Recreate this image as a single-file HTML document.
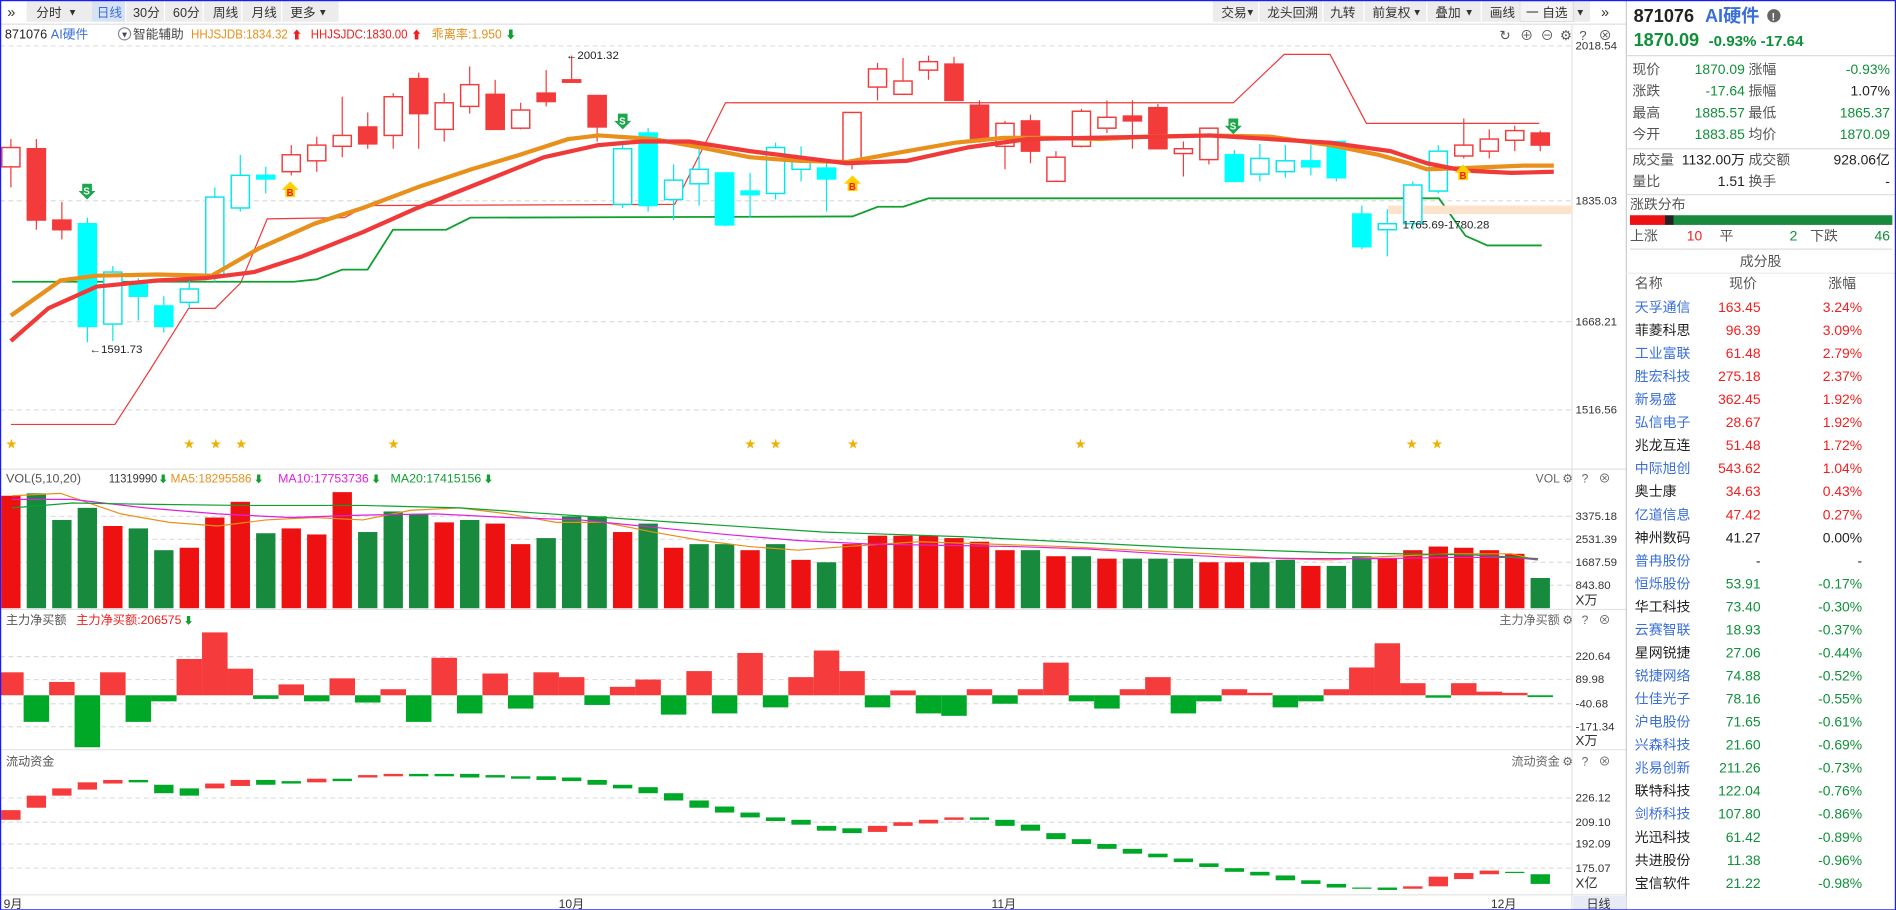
<!DOCTYPE html>
<html><head><meta charset="utf-8">
<style>
html,body{margin:0;padding:0;background:#fff;overflow:hidden}
#wrap{width:1568px;height:753px;transform:scale(1.20918);transform-origin:0 0;position:relative;font-family:"Liberation Sans","Noto Sans CJK SC",sans-serif}
svg text{font-family:"Liberation Sans","Noto Sans CJK SC",sans-serif}
</style></head><body>
<div id="wrap">
<svg id="s" width="1568" height="753" viewBox="0 0 1568 753" xmlns="http://www.w3.org/2000/svg">
<rect x="0" y="0" width="1568" height="753" fill="#fff"/>
<g font-size="10.5" fill="#333">
<rect x="22" y="1" width="54" height="17" fill="#ececec"/>
<rect x="76" y="1" width="28" height="17" fill="#d7e3f5"/>
<rect x="104" y="1" width="176" height="17" fill="#ececec"/>
<line x1="104" y1="1" x2="104" y2="18" stroke="#fff"/><line x1="136" y1="1" x2="136" y2="18" stroke="#fff"/><line x1="168" y1="1" x2="168" y2="18" stroke="#fff"/><line x1="200" y1="1" x2="200" y2="18" stroke="#fff"/><line x1="233" y1="1" x2="233" y2="18" stroke="#fff"/>
<text x="6" y="14" font-size="12">»</text>
<text x="30" y="14">分时</text><text x="56" y="13" font-size="8">▼</text>
<text x="80" y="14" fill="#3a6fd8">日线</text>
<text x="110" y="14">30分</text><text x="143" y="14">60分</text><text x="176" y="14">周线</text><text x="208" y="14">月线</text><text x="240" y="14">更多</text><text x="263" y="13" font-size="8">▼</text>
<rect x="1003" y="1" width="312" height="17" fill="#ececec"/>
<g stroke="#fff"><line x1="1041" y1="1" x2="1041" y2="18"/><line x1="1094" y1="1" x2="1094" y2="18"/><line x1="1128" y1="1" x2="1128" y2="18"/><line x1="1180" y1="1" x2="1180" y2="18"/><line x1="1225" y1="1" x2="1225" y2="18"/><line x1="1257" y1="1" x2="1257" y2="18"/></g>
<rect x="1257" y="1" width="44" height="17" fill="#f4f4f4" stroke="#ccc" stroke-width="0.5"/>
<text x="1010" y="14">交易</text><text x="1030" y="13" font-size="8">▼</text>
<text x="1048" y="14">龙头回溯</text><text x="1100" y="14">九转</text>
<text x="1135" y="14">前复权</text><text x="1168" y="13" font-size="8">▼</text>
<text x="1187" y="14">叠加</text><text x="1211" y="13" font-size="8">▼</text>
<text x="1232" y="14">画线</text><text x="1262" y="14">一 自选</text><text x="1303" y="13" font-size="8">▼</text>
<text x="1324" y="14" font-size="12">»</text>
</g>
<line x1="0" y1="20" x2="1345" y2="20" stroke="#ddd"/>
<g font-size="10.5">
<text x="4" y="32" fill="#222">871076</text><text x="42" y="32" fill="#3a6fd8">AI硬件</text>
<circle cx="103" cy="28" r="5" fill="#fff" stroke="#889"/><text x="99.5" y="31" font-size="7" fill="#445">▼</text>
<text x="110" y="32" fill="#444">智能辅助</text>
<text x="158" y="32" fill="#e8901a" textLength="80" lengthAdjust="spacingAndGlyphs">HHJSJDB:1834.32</text><text x="241" y="32" fill="#f02020" font-size="9">⬆</text>
<text x="257" y="32" fill="#f02020" textLength="80" lengthAdjust="spacingAndGlyphs">HHJSJDC:1830.00</text><text x="340" y="32" fill="#f02020" font-size="9">⬆</text>
<text x="357" y="32" fill="#e0901a" textLength="58" lengthAdjust="spacingAndGlyphs">乖离率:1.950</text><text x="418" y="32" fill="#10a030" font-size="9">⬇</text>
</g>
<g font-size="11" fill="#555"><text x="1240" y="33">↻</text><text x="1257" y="33">⊕</text><text x="1274" y="33">⊖</text><text x="1290" y="33">⚙</text><text x="1306" y="33">?</text><text x="1322" y="33">⊗</text></g>
<g stroke="#ddd" stroke-dasharray="4,3">
<line x1="0" y1="38" x2="1300" y2="38"/><line x1="0" y1="166" x2="1300" y2="166"/><line x1="0" y1="266" x2="1300" y2="266"/><line x1="0" y1="339" x2="1300" y2="339"/>
<line x1="0" y1="427" x2="1300" y2="427"/><line x1="0" y1="446" x2="1300" y2="446"/><line x1="0" y1="465" x2="1300" y2="465"/><line x1="0" y1="484" x2="1300" y2="484"/>
<line x1="0" y1="543" x2="1300" y2="543"/><line x1="0" y1="562" x2="1300" y2="562"/><line x1="0" y1="582" x2="1300" y2="582"/><line x1="0" y1="601" x2="1300" y2="601"/>
<line x1="0" y1="660" x2="1300" y2="660"/><line x1="0" y1="680" x2="1300" y2="680"/><line x1="0" y1="698" x2="1300" y2="698"/><line x1="0" y1="718" x2="1300" y2="718"/>
</g>
<g stroke="#e2e2e2"><line x1="0" y1="388" x2="1345" y2="388"/><line x1="0" y1="504" x2="1345" y2="504"/><line x1="0" y1="620" x2="1345" y2="620"/><line x1="0" y1="740" x2="1345" y2="740"/>
<line x1="1300" y1="20" x2="1300" y2="753"/><line x1="1345" y1="0" x2="1345" y2="753" stroke="#ccc"/></g>
<g font-size="9.5" fill="#333">
<text x="1303" y="41">2018.54</text><text x="1303" y="169">1835.03</text><text x="1303" y="269">1668.21</text><text x="1303" y="342">1516.56</text>
<text x="1303" y="430">3375.18</text><text x="1303" y="449">2531.39</text><text x="1303" y="468">1687.59</text><text x="1303" y="487">843.80</text><text x="1303" y="500" font-size="11">X万</text>
<text x="1303" y="546">220.64</text><text x="1303" y="565">89.98</text><text x="1303" y="585">-40.68</text><text x="1303" y="604">-171.34</text><text x="1303" y="616" font-size="11">X万</text>
<text x="1303" y="663">226.12</text><text x="1303" y="683">209.10</text><text x="1303" y="701">192.09</text><text x="1303" y="721">175.07</text><text x="1303" y="734" font-size="11">X亿</text>
</g>
<rect x="1301" y="741" width="44" height="12" fill="#e6ebf5"/>
<g font-size="10" fill="#333"><text x="1312" y="751">日线</text><text x="3" y="751">9月</text><text x="462" y="751">10月</text><text x="820" y="751">11月</text><text x="1233" y="751">12月</text></g>
<g font-size="10">
<text x="5" y="399" fill="#555" textLength="62" lengthAdjust="spacingAndGlyphs">VOL(5,10,20)</text><text x="90" y="399" fill="#333" textLength="40" lengthAdjust="spacingAndGlyphs">11319990</text><text x="131" y="399" fill="#10a030" font-size="8">⬇</text>
<text x="141" y="399" fill="#e8901a" textLength="67" lengthAdjust="spacingAndGlyphs">MA5:18295586</text><text x="210" y="399" fill="#10a030" font-size="8">⬇</text>
<text x="230" y="399" fill="#e020e0" textLength="75" lengthAdjust="spacingAndGlyphs">MA10:17753736</text><text x="307" y="399" fill="#10a030" font-size="8">⬇</text>
<text x="323" y="399" fill="#10a030" textLength="75" lengthAdjust="spacingAndGlyphs">MA20:17415156</text><text x="400" y="399" fill="#10a030" font-size="8">⬇</text>
<text x="1270" y="399" fill="#666">VOL</text>
<text x="5" y="516" fill="#555">主力净买额</text><text x="63" y="516" fill="#f02020" textLength="87" lengthAdjust="spacingAndGlyphs">主力净买额:206575</text><text x="152" y="516" fill="#10a030" font-size="8">⬇</text>
<text x="1240" y="516" fill="#666">主力净买额</text>
<text x="5" y="633" fill="#555">流动资金</text><text x="1250" y="633" fill="#666">流动资金</text>
</g>
<g font-size="10" fill="#666"><text x="1292" y="399">⚙</text><text x="1308" y="399">?</text><text x="1322" y="399">⊗</text>
<text x="1292" y="516">⚙</text><text x="1308" y="516">?</text><text x="1322" y="516">⊗</text>
<text x="1292" y="633">⚙</text><text x="1308" y="633">?</text><text x="1322" y="633">⊗</text></g>
<g id="chart"></g>
<polyline fill="none" stroke="#f03a3a" stroke-width="1" points="9,351 95,351 124,306 156,255 178,255 199,234 221,181 285,180 303,170 558,169 600,85 1020,85 1062,45 1100,45 1130,102 1273,102"/>
<polyline fill="none" stroke="#10a030" stroke-width="1.5" points="10,233 243,233 262,231 283,223 304,223 325,190 369,190 389,180 705,179 726,171 747,171 768,164 1190,164 1212,195 1230,203 1275,203"/>
<rect x="1148" y="170" width="152" height="7" fill="#fde3cc"/>
<g id="cand"></g>
<text x="1160" y="189" font-size="9.5" fill="#222">1765.69-1780.28</text>
<text x="468" y="49" font-size="9.5" fill="#222">←2001.32</text>
<text x="74" y="292" font-size="9.5" fill="#222">←1591.73</text>
<polyline fill="none" stroke="#e8901a" stroke-width="3.5" stroke-linejoin="round" points="9,261 50,232 80,228 130,227 175,228 215,205 260,185 300,172 345,155 390,140 430,128 470,115 495,112 540,115 580,122 620,130 660,133 700,134 750,125 790,118 830,114 870,114 910,115 950,113 1000,112 1050,113 1100,120 1140,128 1165,135 1180,140 1210,139 1260,137 1285,137"/>
<polyline fill="none" stroke="#f03a3a" stroke-width="3.5" stroke-linejoin="round" points="9,282 40,255 80,237 130,232 170,230 210,225 250,212 300,192 345,172 400,150 450,130 495,120 530,117 570,117 620,125 660,130 700,135 750,133 800,122 850,115 900,114 960,113 1000,112 1050,115 1100,118 1150,125 1180,135 1210,141 1250,143 1285,142"/>
<g id="marks"></g>
<g font-size="9" fill="#f0b000"><text x="5" y="370">★</text><text x="152" y="370">★</text><text x="174" y="370">★</text><text x="195" y="370">★</text><text x="321" y="370">★</text><text x="616" y="370">★</text><text x="637" y="370">★</text><text x="701" y="370">★</text><text x="889" y="370">★</text><text x="1163" y="370">★</text><text x="1184" y="370">★</text></g>
<polyline fill="none" stroke="#e8901a" stroke-width="1" points="10,410 50,408 100,425 140,432 180,435 220,430 260,428 300,430 340,422 380,420 420,425 460,432 500,432 540,440 580,447 620,452 660,455 700,452 760,448 820,450 880,452 940,455 1000,458 1060,462 1100,463 1150,460 1200,458 1250,458 1270,463"/>
<polyline fill="none" stroke="#e020e0" stroke-width="1" points="10,413 60,413 120,420 180,425 240,428 300,426 360,425 420,428 480,430 540,436 600,442 660,447 720,450 780,451 840,452 900,454 960,458 1020,461 1080,462 1140,462 1200,461 1250,461 1272,463"/>
<polyline fill="none" stroke="#10a030" stroke-width="1" points="10,420 60,416 120,417 200,418 300,418 380,420 440,424 500,428 560,432 620,436 680,440 740,442 800,444 860,447 920,450 980,453 1040,455 1100,457 1160,458 1220,459 1272,462"/>
<g font-size="11.5">
<text x="1351" y="18" font-size="15" font-weight="bold" fill="#222">871076</text><text x="1410" y="18" font-size="15" font-weight="bold" fill="#3a6fd8">AI硬件</text>
<circle cx="1467" cy="13" r="5.5" fill="#666"/><text x="1465" y="17" font-size="9" fill="#fff" font-weight="bold">!</text>
<text x="1351" y="38" font-size="15" font-weight="bold" fill="#10903a">1870.09</text><text x="1413" y="38" font-size="12.5" font-weight="bold" fill="#10903a">-0.93% -17.64</text>
<line x1="1345" y1="46" x2="1568" y2="46" stroke="#ddd"/>
<g fill="#555"><text x="1350" y="61">现价</text><text x="1350" y="79">涨跌</text><text x="1350" y="97">最高</text><text x="1350" y="115">今开</text>
<text x="1446" y="61">涨幅</text><text x="1446" y="79">振幅</text><text x="1446" y="97">最低</text><text x="1446" y="115">均价</text></g>
<g text-anchor="end"><text x="1443" y="61" fill="#10903a">1870.09</text><text x="1443" y="79" fill="#10903a">-17.64</text><text x="1443" y="97" fill="#10903a">1885.57</text><text x="1443" y="115" fill="#10903a">1883.85</text>
<text x="1563" y="61" fill="#10903a">-0.93%</text><text x="1563" y="79" fill="#222">1.07%</text><text x="1563" y="97" fill="#10903a">1865.37</text><text x="1563" y="115" fill="#10903a">1870.09</text></g>
<line x1="1345" y1="123" x2="1568" y2="123" stroke="#ddd"/>
<g fill="#555"><text x="1350" y="136">成交量</text><text x="1350" y="154">量比</text><text x="1446" y="136">成交额</text><text x="1446" y="154">换手</text></g>
<g text-anchor="end" fill="#222"><text x="1443" y="136">1132.00万</text><text x="1443" y="154">1.51</text><text x="1563" y="136">928.06亿</text><text x="1563" y="154">-</text></g>
<line x1="1345" y1="161" x2="1568" y2="161" stroke="#ddd"/>
<text x="1348" y="173" fill="#555">涨跌分布</text>
<rect x="1348" y="178" width="29" height="8" fill="#ee1111"/><rect x="1377" y="178" width="7" height="8" fill="#222"/><rect x="1384" y="178" width="181" height="8" fill="#178a3e"/>
<text x="1348" y="199" fill="#555">上涨</text><text x="1395" y="199" fill="#f02020">10</text><text x="1422" y="199" fill="#555">平</text><text x="1480" y="199" fill="#10903a">2</text><text x="1497" y="199" fill="#555">下跌</text><text x="1563" y="199" fill="#10903a" text-anchor="end">46</text>
<line x1="1348" y1="206" x2="1565" y2="206" stroke="#ddd"/>
<text x="1456" y="220" fill="#555" text-anchor="middle">成分股</text>
<line x1="1345" y1="226" x2="1568" y2="226" stroke="#eee"/>
<text x="1352" y="238" fill="#555">名称</text><text x="1430" y="238" fill="#555">现价</text><text x="1512" y="238" fill="#555">涨幅</text>
</g>
<g id="list" font-size="11.5"></g>
<rect x="0.5" y="0.5" width="1567" height="752" fill="none" stroke="#1a1aff" stroke-width="1"/>
</svg>
</div>
<script>
var NS="http://www.w3.org/2000/svg";
function el(p,t,a){var e=document.createElementNS(NS,t);for(var k in a)e.setAttribute(k,a[k]);p.appendChild(e);return e;}
var X=function(i){return 9+21.08*i;};
var C=[['rh',122,138,115,155],['rf',123,182,115,190],['rf',182,190,167,198],['cf',185,270,180,283],['ch',225,268,220,282],['cf',233,245,230,265],['cf',253,270,245,275],['ch',239,250,229,255],['ch',163,227,155,233],['ch',145,172,128,175],['cf',145,148,138,160],['rh',128,142,120,145],['rh',120,133,113,142],['rh',112,121,80,130],['rf',105,119,93,123],['rh',80,112,77,123],['rf',65,94,60,123],['rh',85,107,77,117],['rh',70,88,55,94],['rf',78,107,66,107],['rh',91,106,85,107],['rf',77,84,58,88],['rf',66,68,46,68],['rf',79,105,79,117],['ch',123,169,120,172],['cf',110,170,106,175],['ch',149,165,136,182],['ch',140,152,120,170],['cf',143,186,143,187],['cf',158,161,143,180],['ch',122,160,118,165],['ch',131,140,121,150],['cf',139,148,132,175],['rh',93,133,93,140],['rh',57,72,52,83],['rh',67,78,48,78],['rh',51,58,46,66],['rf',53,83,47,83],['rf',87,115,83,118],['rh',102,121,100,140],['rf',100,125,95,135],['rh',130,150,125,150],['rh',92,121,90,122],['rh',97,106,83,110],['rf',96,100,83,123],['rf',89,123,86,123],['rh',123,127,117,146],['rh',106,132,106,136],['cf',128,150,124,150],['ch',131,144,119,150],['ch',133,142,120,147],['cf',133,138,120,145],['cf',117,147,117,150],['cf',177,204,170,206],['ch',185,190,173,212],['ch',153,185,150,190],['ch',125,158,120,160],['rh',120,129,98,131],['rh',115,125,107,131],['rh',108,116,104,125],['rf',110,120,108,125]];
var g=document.getElementById('cand'),ch=document.getElementById('chart');
C.forEach(function(c,i){var x=X(i),red=c[0][0]=='r',col=red?'#f33b3b':'#00e8ee',fill=c[0][1]=='f'?(red?'#f33b3b':'#00ffff'):'#fff';
el(g,'line',{x1:x,y1:c[3],x2:x,y2:c[4],stroke:col,'stroke-width':1});
el(g,'rect',{x:x-7.5,y:c[1],width:15,height:Math.max(1.5,c[2]-c[1]),fill:fill,stroke:c[0][1]=='f'?fill:col,'stroke-width':1.2});});
var V=[['r',410],['g',408],['g',430],['g',420],['r',435],['g',437],['g',455],['r',453],['r',428],['r',415],['g',441],['r',437],['r',442],['r',407],['g',440],['g',423],['g',425],['r',432],['g',430],['r',433],['r',450],['g',445],['g',427],['g',427],['r',440],['g',433],['r',453],['g',450],['g',450],['r',455],['g',450],['r',463],['g',465],['r',450],['r',443],['r',443],['r',443],['r',445],['r',448],['r',455],['g',455],['r',460],['g',460],['r',462],['g',462],['g',462],['g',462],['r',465],['r',465],['g',465],['g',463],['r',468],['g',468],['g',460],['r',462],['r',455],['r',452],['r',453],['r',455],['r',458],['g',478]];
V.forEach(function(v,i){var x=X(i);el(ch,'rect',{x:x-8,y:v[1],width:16,height:503-v[1],fill:v[0]=='r'?'#ee1111':'#178a3e'});});
var N=[556,597,564,618,556,597,580,545,523,553,578,566,580,561,581,570,597,544,590,557,586,556,560,583,568,562,591,555,590,540,585,560,538,555,585,571,590,592,570,582,570,548,580,586,570,560,590,580,570,573,585,580,570,552,532,565,577,565,572,573,575];
var Z=575;N.forEach(function(v,i){var x=X(i);var up=v<Z;el(ch,'rect',{x:x-10.55,y:up?v:Z,width:21.1,height:Math.max(1.5,Math.abs(v-Z)),fill:up?'#f53b3b':'#00a828'});});
var F=[670,658,652,647,645,645,649,652,648,645,645,646,644,644,641,640,640,640,640,641,642,642,643,645,649,651,656,662,667,672,676,678,683,685,683,680,678,676,676,678,682,689,694,698,702,706,710,714,718,721,724,728,731,734,734,733,725,722,720,721,723];
var FH=[8,10,6,6,3,2,7,6,4,5,4,2,3,2,2,2,2,2,3,2,2,3,3,4,3,5,6,6,5,4,3,4,4,4,5,3,3,2,2,5,5,5,4,4,4,3,3,3,3,3,4,3,3,1,2,2,8,5,3,1,8];
F.forEach(function(v,i){var x=X(i);var up=i==0||v<F[i-1];el(ch,'rect',{x:x-8,y:v,width:16,height:FH[i],fill:up?'#f53b3b':'#00a828'});});
var m=document.getElementById('marks');
function arrow(x,y,c,t,down){var p=down?'M'+(x-4)+','+(y-8)+'h8v6h3l-7,7l-7,-7h3z':'M'+(x-4)+','+(y+8)+'h8v-6h3l-7,-7l-7,7h3z';el(m,'path',{d:p,fill:c});var tx=el(m,'text',{x:x-3,y:down?y+1:y+7,'font-size':8,'font-weight':'bold',fill:down?'#fff':'#f02020'});tx.textContent=t;}
arrow(72,160,'#1aa84a','S',true);arrow(515,102,'#1aa84a','S',true);arrow(1020,106,'#1aa84a','S',true);
arrow(240,155,'#ffd000','B',false);arrow(705,150,'#ffd000','B',false);arrow(1210,141,'#ffd000','B',false);
var L=[['天孚通信','163.45','3.24%',1],['菲菱科思','96.39','3.09%',0],['工业富联','61.48','2.79%',1],['胜宏科技','275.18','2.37%',1],['新易盛','362.45','1.92%',1],['弘信电子','28.67','1.92%',1],['兆龙互连','51.48','1.72%',0],['中际旭创','543.62','1.04%',1],['奥士康','34.63','0.43%',0],['亿道信息','47.42','0.27%',1],['神州数码','41.27','0.00%',0],['普冉股份','-','-',1],['恒烁股份','53.91','-0.17%',1],['华工科技','73.40','-0.30%',0],['云赛智联','18.93','-0.37%',1],['星网锐捷','27.06','-0.44%',0],['锐捷网络','74.88','-0.52%',1],['仕佳光子','78.16','-0.55%',1],['沪电股份','71.65','-0.61%',1],['兴森科技','21.60','-0.69%',1],['兆易创新','211.26','-0.73%',1],['联特科技','122.04','-0.76%',0],['剑桥科技','107.80','-0.86%',1],['光迅科技','61.42','-0.89%',0],['共进股份','11.38','-0.96%',0],['宝信软件','21.22','-0.98%',0]];
var lg=document.getElementById('list');
L.forEach(function(r,i){var y=258+i*19.05;var c=r[2].charAt(0)=='-'?(r[2]=='-'?'#222':'#10903a'):(r[2]=='0.00%'?'#222':'#f02020');var pc=r[1]=='41.27'||r[1]=='-'?'#222':c;
var a=el(lg,'text',{x:1352,y:y,fill:r[3]?'#3a6fd8':'#222'});a.textContent=r[0];
var b=el(lg,'text',{x:1456,y:y,fill:pc,'text-anchor':'end'});b.textContent=r[1];
var d=el(lg,'text',{x:1540,y:y,fill:c,'text-anchor':'end'});d.textContent=r[2];});
</script>
</body></html>
